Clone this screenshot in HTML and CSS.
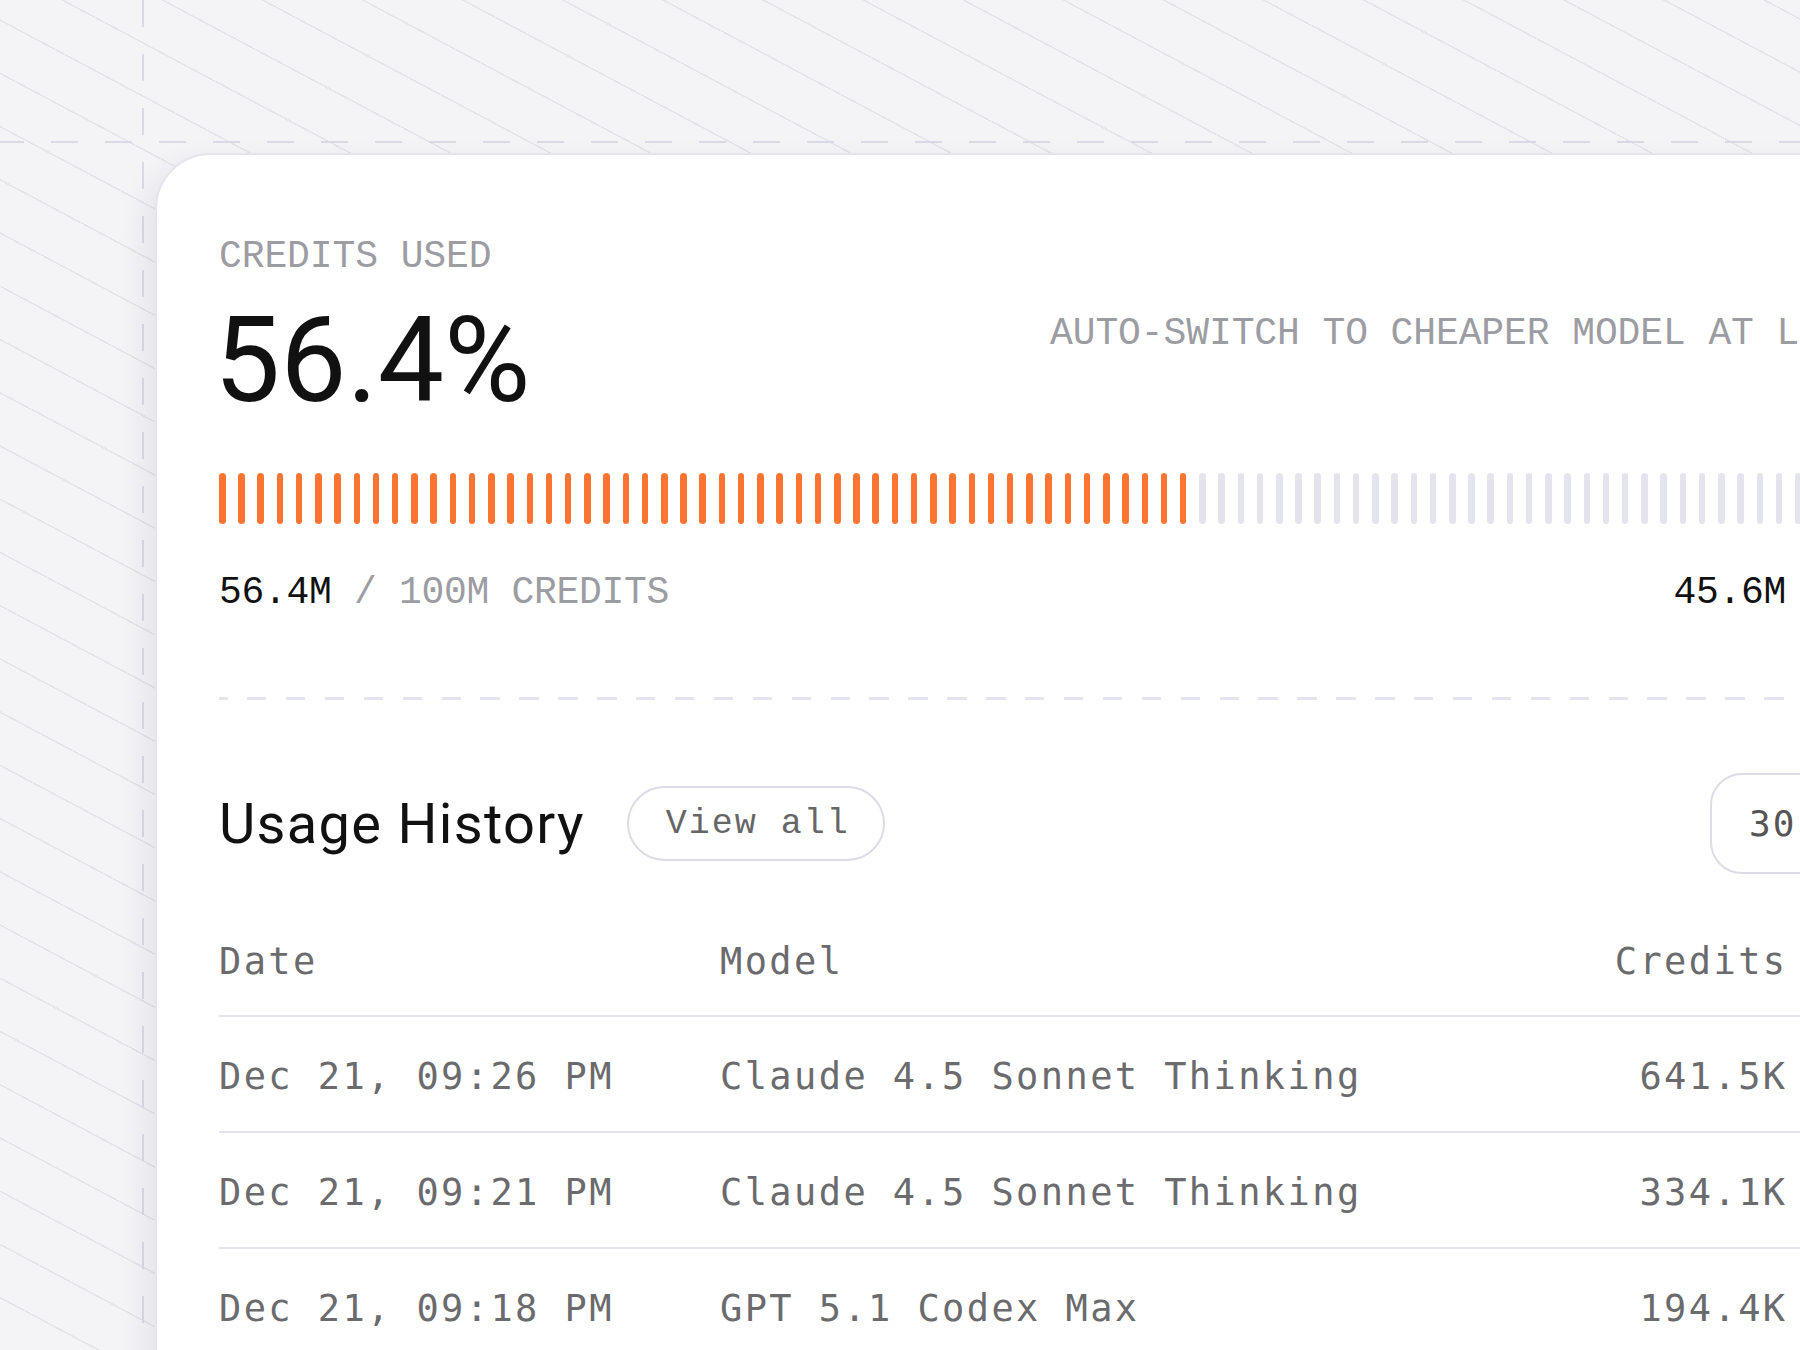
FILE: index.html
```html
<!DOCTYPE html>
<html lang="en">
<head>
  <meta charset="UTF-8" />
  <meta name="viewport" content="width=device-width, initial-scale=1.0"/>
  <title>Credits Usage</title>
  <link rel="stylesheet" href="styles.css">
</head>
<body>
  <div class="card">
    <div class="summary">
      <div class="summary-main">
        <div class="label">Credits used</div>
        <div class="big-number">56.4%</div>
      </div>
      <div class="auto-switch">
        <span class="label">Auto-switch to cheaper model at limit</span>
        <span class="toggle"><span class="knob"></span></span>
      </div>
    </div>

    <div class="meter" id="meter" data-percent="56.4"></div>

    <div class="meter-legend">
      <div><span class="dark">56.4M</span> / 100M credits</div>
      <div class="left"><span class="dark">45.6M</span> remaining</div>
    </div>

    <div class="divider"></div>

    <div class="history-head">
      <h2>Usage History</h2>
      <button class="pill">View all</button>
      <button class="range">30 days
        <svg width="22" height="22" viewBox="0 0 24 24" fill="none" stroke="#777" stroke-width="2.5" stroke-linecap="round" stroke-linejoin="round"><path d="M6 9l6 6 6-6"/></svg>
      </button>
    </div>

    <table>
      <thead>
        <tr>
          <th class="col-date">Date</th>
          <th>Model</th>
          <th class="num">Credits</th>
        </tr>
      </thead>
      <tbody>
        <tr><td>Dec 21, 09:26 PM</td><td>Claude 4.5 Sonnet Thinking</td><td class="num">641.5K</td></tr>
        <tr><td>Dec 21, 09:21 PM</td><td>Claude 4.5 Sonnet Thinking</td><td class="num">334.1K</td></tr>
        <tr><td>Dec 21, 09:18 PM</td><td>GPT 5.1 Codex Max</td><td class="num">194.4K</td></tr>
        <tr><td>Dec 21, 09:12 PM</td><td>GPT 5.1 Codex Max</td><td class="num">88.2K</td></tr>
      </tbody>
    </table>
  </div>

  <script>
    const meter = document.getElementById('meter');
    const total = 90;
    const filled = Math.round(total * parseFloat(meter.dataset.percent) / 100);
    for (let i = 0; i < total; i++) {
      const bar = document.createElement('span');
      if (i < filled) bar.className = 'on';
      meter.appendChild(bar);
    }
  </script>
</body>
</html>
```

FILE: styles.css
```css
* {
  box-sizing: border-box;
}
html, body {
  margin: 0;
  height: 100%;
  overflow: hidden;
}
body {
  padding: 153px 0 0 155px;
  font-family: "Liberation Mono", monospace;
  background-color: #f4f4f7;
  background-image:
    repeating-linear-gradient(to right, #d9d9e7 0 27px, transparent 27px 54px),
    repeating-linear-gradient(to bottom, #d9d9e7 0 27px, transparent 27px 54px),
    repeating-linear-gradient(28deg, transparent 0 45.5px, #e3e3ea 45.5px 47px);
  background-size: calc(100% + 3px) 2px, 2px 100%, auto;
  background-position: -3px 141px, 142px 0, 0 0;
  background-repeat: no-repeat, no-repeat, repeat;
}

.card {
  box-sizing: content-box;
  width: 1798px;
  padding: 83px 62px 80px;
  background: #fff;
  border: 2px solid #e4e4ee;
  border-radius: 56px;
  box-shadow: -8px 12px 32px rgba(30, 30, 70, 0.08);
}

.label {
  font-size: 38px;
  line-height: 38px;
  letter-spacing: -0.1px;
  text-transform: uppercase;
  color: #9c9ca3;
  white-space: nowrap;
}

.summary {
  display: grid;
  grid-template-columns: 831px 1fr;
}
.big-number {
  margin-top: 26px;
  margin-left: -5px;
  font-family: Roboto, sans-serif;
  font-size: 118px;
  line-height: 118px;
  color: #111;
}
.auto-switch {
  margin-top: 77px;
  display: flex;
  align-items: flex-start;
  gap: 23px;
}
.toggle {
  flex: none;
  width: 100px;
  height: 56px;
  margin-top: -9px;
  padding: 6px;
  border-radius: 28px;
  background: #e4e4ee;
}
.knob {
  display: block;
  width: 44px;
  height: 44px;
  border-radius: 50%;
  background: #fff;
}

.meter {
  margin-top: 53px;
  height: 51px;
  display: flex;
  gap: 12.73px;
}
.meter span {
  flex: none;
  width: 6.5px;
  border-radius: 4px;
  background: #e4e4ee;
}
.meter span.on {
  background: #fc7431;
}

.meter-legend {
  margin-top: 50px;
  display: flex;
  justify-content: space-between;
  font-size: 38px;
  line-height: 38px;
  letter-spacing: -0.3px;
  text-transform: uppercase;
  color: #9c9ca3;
}
.meter-legend .left {
  margin-right: 6px;
}
.dark {
  color: #111;
}

.divider {
  margin-top: 85px;
  height: 3px;
  background: repeating-linear-gradient(to right, #e4e4ee 0 8.5px, transparent 8.5px 28px, #e4e4ee 28px 38.9px);
}

.history-head {
  margin-top: 73px;
  height: 101px;
  display: flex;
  align-items: center;
}
.history-head h2 {
  margin: 0;
  font-family: Roboto, sans-serif;
  font-size: 56px;
  line-height: 56px;
  font-weight: 400;
  letter-spacing: 1.3px;
  color: #111;
}
.pill {
  margin-left: 42px;
  height: 75px;
  padding: 0 33px 0 37px;
  border: 2px solid #dcdce8;
  border-radius: 40px;
  background: #fff;
  font-family: "Liberation Mono", monospace;
  font-size: 35px;
  letter-spacing: 2px;
  color: #666;
}
.range {
  margin-left: auto;
  width: 307px;
  height: 101px;
  padding: 0 0 0 37px;
  display: flex;
  align-items: center;
  gap: 16px;
  border: 2px solid #dcdce8;
  border-radius: 32px;
  background: #fff;
  font-family: "DejaVu Sans Mono", monospace;
  font-size: 36px;
  letter-spacing: 2px;
  color: #555;
}

table {
  width: 100%;
  margin-top: 68px;
  border-collapse: collapse;
}
th, td {
  padding: 0;
  font-family: "DejaVu Sans Mono", monospace;
  font-size: 37px;
  font-weight: 400;
  letter-spacing: 2.4px;
  line-height: 40px;
  text-align: left;
  color: #6b6b6e;
  white-space: nowrap;
}
th {
  padding-bottom: 33px;
  border-bottom: 2px solid #e4e4ee;
}
td {
  padding: 40px 0 34px;
  border-bottom: 2px solid #e4e4ee;
}
.col-date {
  width: 501px;
}
th.num, td.num {
  text-align: right;
  padding-right: 229.5px;
}
```
